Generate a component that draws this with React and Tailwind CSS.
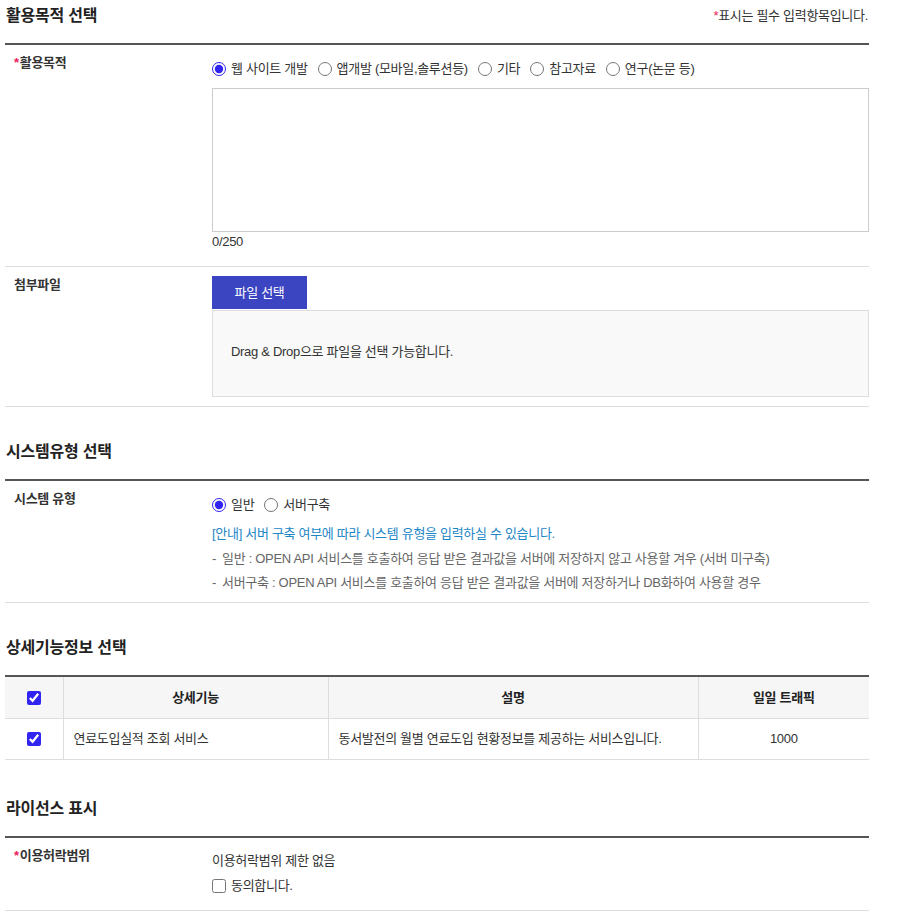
const font = { fontFamily: '"Liberation Sans", "Noto Sans CJK KR", sans-serif' };

const SectionTitle = ({ title, note, className = '' }) => (
  <div className={`flex h-[45px] items-start justify-between border-b-2 border-[#555] pt-[4px] ${className}`}>
    <h2 className="pl-px text-[16px] font-bold leading-6 tracking-[-0.2px] text-[#222]">{title}</h2>
    {note && (
      <p className="pr-px text-[13px] leading-6 text-[#333]">
        <span className="text-[#e8235a]">*</span>표시는 필수 입력항목입니다.
      </p>
    )}
  </div>
);

const Row = ({ label, required, children }) => (
  <div className="flex border-b border-[#ddd]">
    <div className="w-[207px] shrink-0 pt-2 pl-[9px] text-[13px] font-bold leading-5 text-[#333]">
      {required && <span className="mr-px text-[#e8235a]">*</span>}
      {label}
    </div>
    <div className="min-w-0 flex-1">{children}</div>
  </div>
);

const Radio = ({ name, label, checked }) => (
  <label className="mr-[10px] inline-flex items-center gap-[5px]">
    <input
      type="radio"
      name={name}
      defaultChecked={checked}
      className="m-0 h-[14px] w-[14px] accent-[#3124f0]"
    />
    <span>{label}</span>
  </label>
);

const Dash = () => <span className="inline-block w-[10px]">-</span>;

export default function App() {
  const purposes = ['웹 사이트 개발', '앱개발 (모바일,솔루션등)', '기타', '참고자료', '연구(논문 등)'];

  return (
    <div className="w-[869px] bg-white pl-[5px] text-[13px] tracking-[-0.3px] text-[#333]" style={font}>
      {/* 활용목적 */}
      <SectionTitle title="활용목적 선택" note />
      <Row label="활용목적" required>
        <div className="pt-[14px] pb-[15px]">
          <div className="flex h-5 items-center leading-5">
            {purposes.map((p, i) => (
              <Radio key={p} name="purpose" label={p} checked={i === 0} />
            ))}
          </div>
          <textarea className="mt-[9px] block h-[144px] w-full resize-none border border-[#ccc] bg-white outline-none" />
          <div className="leading-[19px]">0/250</div>
        </div>
      </Row>
      <Row label="첨부파일">
        <div className="py-[9px]">
          <button className="block h-[33px] w-[95px] bg-[#3b44c1] text-[13px] text-white">파일 선택</button>
          <div className="mt-px flex h-[87px] items-center border border-[#ddd] bg-[#f9f9f9] pb-1 pl-[18px]">
            Drag &amp; Drop으로 파일을 선택 가능합니다.
          </div>
        </div>
      </Row>

      {/* 시스템유형 */}
      <SectionTitle title="시스템유형 선택" className="mt-[29px]" />
      <Row label="시스템 유형">
        <div className="pt-[14px] pb-[7px]">
          <div className="flex h-5 items-center leading-5">
            <Radio name="system" label="일반" checked />
            <Radio name="system" label="서버구축" />
          </div>
          <div className="mt-[7px]">
            <p className="leading-6 text-[#1c86c6]">[안내] 서버 구축 여부에 따라 시스템 유형을 입력하실 수 있습니다.</p>
            <p className="leading-[25px] text-[#666]">
              <Dash />일반 : OPEN API 서비스를 호출하여 응답 받은 결과값을 서버에 저장하지 않고 사용할 겨우 (서버 미구축)
            </p>
            <p className="leading-6 text-[#666]">
              <Dash />서버구축 : OPEN API 서비스를 호출하여 응답 받은 결과값을 서버에 저장하거나 DB화하여 사용할 경우
            </p>
          </div>
        </div>
      </Row>

      {/* 상세기능정보 */}
      <SectionTitle title="상세기능정보 선택" className="mt-[29px]" />
      <table className="w-full border-collapse text-[13px]">
        <colgroup>
          <col className="w-[58px]" />
          <col className="w-[265px]" />
          <col className="w-[370px]" />
          <col />
        </colgroup>
        <thead>
          <tr className="h-[41px] bg-[#f6f6f6] font-bold text-[#222]">
            <th className="border-b border-[#ddd]">
              <input type="checkbox" defaultChecked className="m-0 h-[14px] w-[14px] align-middle accent-[#3124f0]" />
            </th>
            <th className="border-b border-l border-[#ddd]">상세기능</th>
            <th className="border-b border-l border-[#ddd]">설명</th>
            <th className="border-b border-l border-[#ddd]">일일 트래픽</th>
          </tr>
        </thead>
        <tbody>
          <tr className="h-[41px]">
            <td className="border-b border-[#ddd] text-center">
              <input type="checkbox" defaultChecked className="m-0 h-[14px] w-[14px] align-middle accent-[#3124f0]" />
            </td>
            <td className="border-b border-l border-[#ddd] pl-[10px]">연료도입실적 조회 서비스</td>
            <td className="border-b border-l border-[#ddd] pl-[10px]">동서발전의 월별 연료도입 현황정보를 제공하는 서비스입니다.</td>
            <td className="border-b border-l border-[#ddd] text-center">1000</td>
          </tr>
        </tbody>
      </table>

      {/* 라이선스 */}
      <SectionTitle title="라이선스 표시" className="mt-[33px]" />
      <Row label="이용허락범위" required>
        <div className="pt-[13px] pb-[14px] leading-5">
          <p>이용허락범위 제한 없음</p>
          <label className="mt-[5px] flex items-center gap-[5px]">
            <input type="checkbox" className="m-0 h-[14px] w-[14px] accent-[#3124f0]" />
            <span>동의합니다.</span>
          </label>
        </div>
      </Row>
    </div>
  );
}
